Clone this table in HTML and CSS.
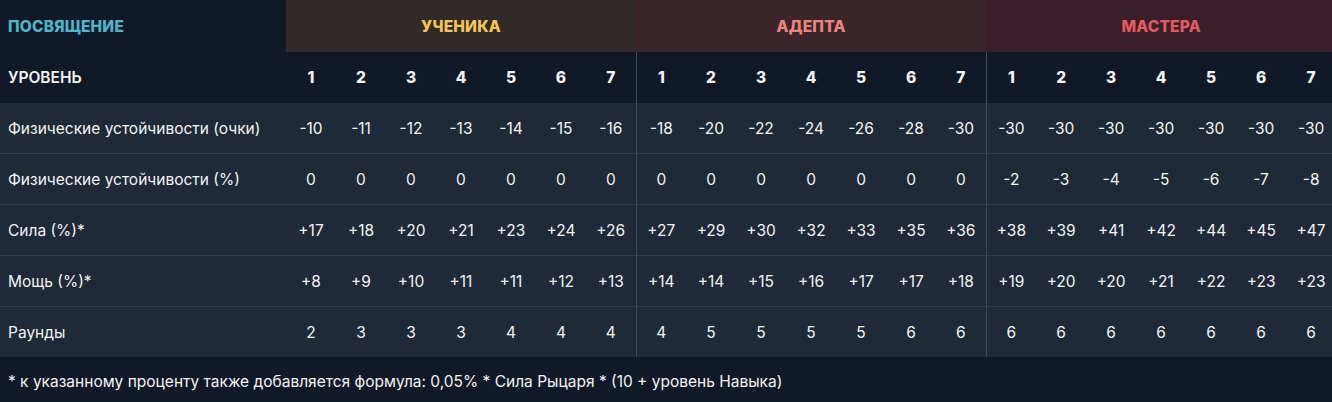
FILE: index.html
```html
<!DOCTYPE html>
<html lang="ru">
<head>
<meta charset="utf-8">
<link rel="stylesheet" href="styles.css">
</head>
<body>
<div class="wrap">
<table class="tbl">
<colgroup>
<col class="c-label">
<col class="c"><col class="c"><col class="c"><col class="c"><col class="c"><col class="c"><col class="c">
<col class="c"><col class="c"><col class="c"><col class="c"><col class="c"><col class="c"><col class="c">
<col class="c"><col class="c"><col class="c"><col class="c"><col class="c"><col class="c"><col class="c">
</colgroup>
<thead>
<tr class="head">
<th class="label title">ПОСВЯЩЕНИЕ</th>
<th colspan="7" class="g g1">УЧЕНИКА</th>
<th colspan="7" class="g g2">АДЕПТА</th>
<th colspan="7" class="g g3">МАСТЕРА</th>
</tr>
<tr class="lvl">
<th class="label">УРОВЕНЬ</th>
<th>1</th><th>2</th><th>3</th><th>4</th><th>5</th><th>6</th><th>7</th>
<th class="sep">1</th><th>2</th><th>3</th><th>4</th><th>5</th><th>6</th><th>7</th>
<th class="sep">1</th><th>2</th><th>3</th><th>4</th><th>5</th><th>6</th><th>7</th>
</tr>
</thead>
<tbody>
<tr>
<td class="label">Физические устойчивости (очки)</td>
<td>-10</td><td>-11</td><td>-12</td><td>-13</td><td>-14</td><td>-15</td><td>-16</td>
<td class="sep">-18</td><td>-20</td><td>-22</td><td>-24</td><td>-26</td><td>-28</td><td>-30</td>
<td class="sep">-30</td><td>-30</td><td>-30</td><td>-30</td><td>-30</td><td>-30</td><td>-30</td>
</tr>
<tr>
<td class="label">Физические устойчивости (%)</td>
<td>0</td><td>0</td><td>0</td><td>0</td><td>0</td><td>0</td><td>0</td>
<td class="sep">0</td><td>0</td><td>0</td><td>0</td><td>0</td><td>0</td><td>0</td>
<td class="sep">-2</td><td>-3</td><td>-4</td><td>-5</td><td>-6</td><td>-7</td><td>-8</td>
</tr>
<tr>
<td class="label">Сила (%)*</td>
<td>+17</td><td>+18</td><td>+20</td><td>+21</td><td>+23</td><td>+24</td><td>+26</td>
<td class="sep">+27</td><td>+29</td><td>+30</td><td>+32</td><td>+33</td><td>+35</td><td>+36</td>
<td class="sep">+38</td><td>+39</td><td>+41</td><td>+42</td><td>+44</td><td>+45</td><td>+47</td>
</tr>
<tr>
<td class="label">Мощь (%)*</td>
<td>+8</td><td>+9</td><td>+10</td><td>+11</td><td>+11</td><td>+12</td><td>+13</td>
<td class="sep">+14</td><td>+14</td><td>+15</td><td>+16</td><td>+17</td><td>+17</td><td>+18</td>
<td class="sep">+19</td><td>+20</td><td>+20</td><td>+21</td><td>+22</td><td>+23</td><td>+23</td>
</tr>
<tr>
<td class="label">Раунды</td>
<td>2</td><td>3</td><td>3</td><td>3</td><td>4</td><td>4</td><td>4</td>
<td class="sep">4</td><td>5</td><td>5</td><td>5</td><td>5</td><td>6</td><td>6</td>
<td class="sep">6</td><td>6</td><td>6</td><td>6</td><td>6</td><td>6</td><td>6</td>
</tr>
</tbody>
</table>
<p class="note">* к указанному проценту также добавляется формула: 0,05% * Сила Рыцаря * (10 + уровень Навыка)</p>
</div>
</body>
</html>
```

FILE: styles.css
```css
html, body {
  margin: 0;
  padding: 0;
  background: #111827;
  overflow: hidden;
}
body {
  font-family: Inter, "Noto Sans", Roboto, sans-serif;
  color: #f3f4f6;
  width: 1332px;
  height: 402px;
}
.wrap {
  width: 1336px;
}
.tbl {
  border-collapse: collapse;
  table-layout: fixed;
  width: 1336px;
}
.c-label { width: 286px; }
.c { width: 50px; }
.tbl th, .tbl td {
  height: 50px;
  padding: 0;
  text-align: center;
  font-size: 15.5px;
  white-space: nowrap;
}
.tbl th.label, .tbl td.label {
  text-align: left;
  padding-left: 8px;
}
.head th {
  height: 51px;
  padding-top: 1px;
  font-weight: 800;
  font-size: 15.5px;
  letter-spacing: 0.2px;
}
.title { color: #4bb7cb; }
.g1 { background: #322a29; color: #f7c64e; }
.g2 { background: #39252a; color: #ee857c; }
.g3 { background: #3a1f2a; color: #e35a5f; }
.lvl th {
  background: #111827;
  font-weight: 800;
  height: 51px;
}
.lvl th.label { font-weight: 600; }
tbody td {
  background: #1f2937;
  border-top: 1px solid #2e3b4e;
  font-weight: 400;
}
tbody tr:first-child td { border-top: none; }
.sep { border-left: 1px solid #3a4a60; }
tbody td.sep { border-left: 1px solid #3a4a60; }
.note {
  margin: 0;
  height: 45px;
  line-height: 50px;
  padding-left: 8px;
  font-size: 15.5px;
}
```
